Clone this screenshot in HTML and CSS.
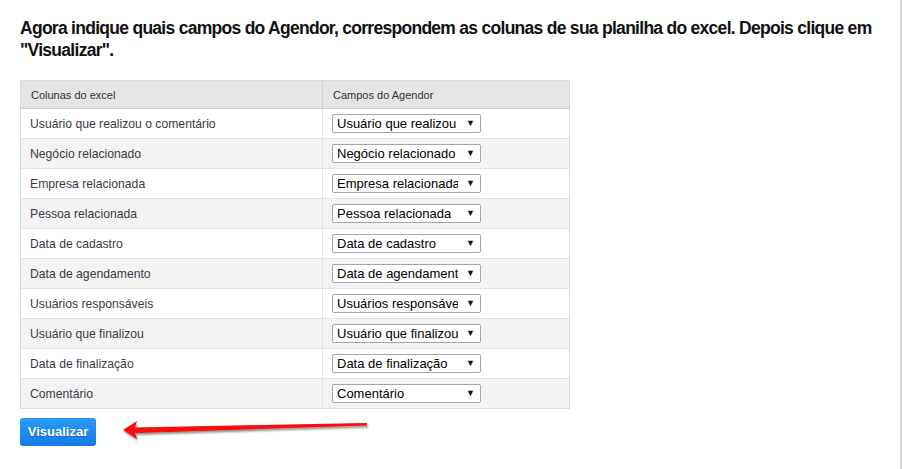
FILE: index.html
```html
<!DOCTYPE html>
<html lang="pt-BR">
<head>
    <meta charset="UTF-8">
    <title>Importar tarefas</title>
    <link rel="stylesheet" href="styles.css">
</head>
<body>
<div class="page">
    <h2 class="title">Agora indique quais campos do Agendor, correspondem as colunas de sua planilha do excel. Depois clique em "Visualizar".</h2>
    <table class="map-table">
        <thead>
        <tr>
            <th class="col-excel">Colunas do excel</th>
            <th>Campos do Agendor</th>
        </tr>
        </thead>
        <tbody>
        <tr>
            <td>Usuário que realizou o comentário</td>
            <td><span class="select-wrap"><select><option>Usuário que realizou o comentário</option></select></span></td>
        </tr>
        <tr>
            <td>Negócio relacionado</td>
            <td><span class="select-wrap"><select><option>Negócio relacionado</option></select></span></td>
        </tr>
        <tr>
            <td>Empresa relacionada</td>
            <td><span class="select-wrap"><select><option>Empresa relacionada</option></select></span></td>
        </tr>
        <tr>
            <td>Pessoa relacionada</td>
            <td><span class="select-wrap"><select><option>Pessoa relacionada</option></select></span></td>
        </tr>
        <tr>
            <td>Data de cadastro</td>
            <td><span class="select-wrap"><select><option>Data de cadastro</option></select></span></td>
        </tr>
        <tr>
            <td>Data de agendamento</td>
            <td><span class="select-wrap"><select><option>Data de agendamento</option></select></span></td>
        </tr>
        <tr>
            <td>Usuários responsáveis</td>
            <td><span class="select-wrap"><select><option>Usuários responsáveis</option></select></span></td>
        </tr>
        <tr>
            <td>Usuário que finalizou</td>
            <td><span class="select-wrap"><select><option>Usuário que finalizou</option></select></span></td>
        </tr>
        <tr>
            <td>Data de finalização</td>
            <td><span class="select-wrap"><select><option>Data de finalização</option></select></span></td>
        </tr>
        <tr>
            <td>Comentário</td>
            <td><span class="select-wrap"><select><option>Comentário</option></select></span></td>
        </tr>
        </tbody>
    </table>
    <div class="actions">
        <a class="button" href="#">Visualizar</a>
        <!-- seta vermelha de anotação -->
        <svg class="arrow" width="260" height="30" viewBox="0 0 260 30">
            <defs>
                <filter id="sh" x="-5%" y="-50%" width="110%" height="200%">
                    <feDropShadow dx="1" dy="2" stdDeviation="1.2" flood-color="#000" flood-opacity="0.45"/>
                </filter>
            </defs>
            <path d="M3 14 L17 5 L15 11.5 L247 7 L247 9.5 L15 17 L17 23 Z" fill="#f80808" filter="url(#sh)"/>
        </svg>
    </div>
</div>
</body>
</html>
```
FILE: styles.css
```css
html,body{
    margin: 0;
    padding: 0;
    background-color: #fff;
    font-family: Arial, "Liberation Sans", sans-serif;
}
.page{
    width: 902px;
    min-height: 469px;
    box-sizing: border-box;
    padding: 17px 0 0 20px;
    border-right: 2px solid #d6d6d6;
}
.title{
    margin: 0 0 19px 0;
    padding-right: 10px;
    font-size: 17.5px;
    letter-spacing: -0.72px;
    line-height: 22px;
    font-weight: bold;
    color: #111;
}
.map-table{
    width: 550px;
    border-collapse: collapse;
    border: 1px solid #dcdcdc;
}
.map-table th{
    height: 27px;
    padding: 0 10px;
    background-color: #e5e5e5;
    border-left: 1px solid #d0d0d0;
    border-bottom: 1px solid #cfcfcf;
    text-align: left;
    font-size: 11px;
    font-weight: normal;
    color: #333;
}
.map-table th.col-excel{
    width: 281px;
    border-left: none;
}
.map-table td{
    height: 29px;
    padding: 0 9px;
    border-top: 1px solid #e2e2e2;
    border-left: 1px solid #e2e2e2;
    font-size: 12.2px;
    color: #3c3a44;
}
.map-table td:first-child{
    border-left: none;
}
.map-table tbody tr:nth-child(even) td{
    background-color: #f3f3f3;
}
.map-table tbody tr:first-child td{
    border-top: none;
}
.select-wrap{
    position: relative;
    display: inline-block;
    vertical-align: middle;
}
.select-wrap select{
    -webkit-appearance: none;
    appearance: none;
    display: block;
    width: 149px;
    height: 19px;
    margin: 0;
    padding: 0 22px 0 4px;
    border: 1px solid #a6a6a6;
    border-radius: 2px;
    background-color: #fff;
    font-family: Arial, "Liberation Sans", sans-serif;
    font-size: 13px;
    color: #000;
}
.select-wrap::after{
    content: "\25BC";
    position: absolute;
    right: 6px;
    top: 4px;
    font-size: 9px;
    line-height: 10px;
    color: #111;
    pointer-events: none;
}
.actions{
    position: relative;
    padding-top: 9px;
    height: 40px;
}
.button{
    display: inline-block;
    width: 76px;
    height: 28px;
    line-height: 28px;
    border-radius: 3px;
    background: linear-gradient(#2a9cf8, #1579e6);
    color: #fff;
    font-size: 13px;
    font-weight: bold;
    text-align: center;
    text-decoration: none;
    text-shadow: 0 1px 1px rgba(0,0,0,.25);
}
.arrow{
    position: absolute;
    left: 100px;
    top: 7px;
}
```
